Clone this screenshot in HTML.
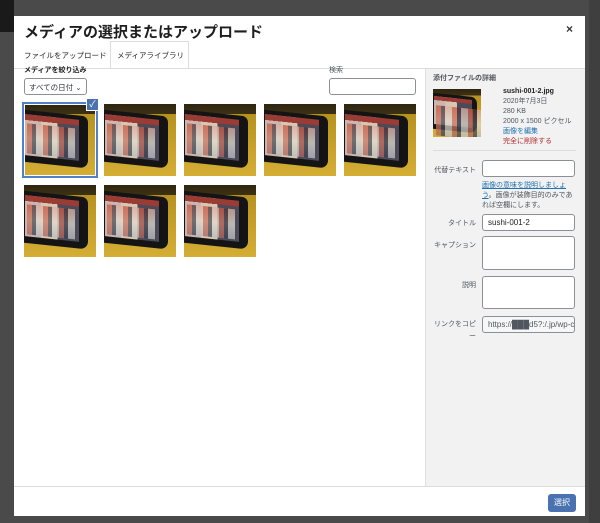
<!DOCTYPE html><html><head><meta charset="utf-8"><style>
*{box-sizing:border-box;margin:0;padding:0}
body{width:600px;height:523px;overflow:hidden;background:#4a4a4a;font-family:"Liberation Sans","Noto Sans CJK JP",sans-serif;position:relative;color:#1e1e1e}
.abs{position:absolute;white-space:nowrap}
.modal{position:absolute;left:14px;top:16px;width:571px;height:500px;background:#fff}
.th{position:absolute;width:72px;height:72px;overflow:hidden;background:linear-gradient(#2e2510 0,#3e3214 14%,#b8921f 14%,#d4ae34 100%)}
.th .fr{position:absolute;left:-2px;top:9px;width:66px;height:52px;background:#141414;border-radius:0 6px 8px 0;transform:skewY(6deg)}
.th .sc{position:absolute;left:1px;top:13px;width:54px;height:41px;transform:skewY(6deg);background:
linear-gradient(#9c3b33 0,#9c3b33 14%,transparent 14%),
linear-gradient(90deg,#c9b7ae 0 30%,#d7c6b0 30% 60%,#4a4a58 60% 100%)}
.th .sc:before{content:"";position:absolute;left:2px;top:9px;width:48px;height:30px;background:
repeating-linear-gradient(90deg,rgba(200,80,50,.7) 0 5px,rgba(30,30,40,.7) 5px 9px,rgba(230,220,200,.6) 9px 16px),
linear-gradient(#c66 0,#ddd 50%,#7890b8 100%);opacity:.75}
.lbl{font-size:7px;color:#50575e;text-align:right;width:70px;left:406px}
.inp{position:absolute;left:482px;width:93px;border:1px solid #8c8f94;border-radius:3px;background:#fff;font-size:8px;padding:3px 5px;white-space:nowrap;overflow:hidden}
</style></head><body>
<div class="abs" style="left:0;top:0;width:14px;height:32px;background:#1a1a1a"></div>
<div class="abs" style="left:589px;top:0;width:11px;height:523px;background:#3f3f3f"></div>
<div class="modal"></div>
<div class="abs" style="left:24px;top:21px;font-size:15px;font-weight:bold">メディアの選択またはアップロード</div>
<div class="abs" style="left:566px;top:22px;font-size:12px;font-weight:bold;color:#333">×</div>
<div class="abs" style="left:24px;top:50px;font-size:7.5px">ファイルをアップロード</div>
<div class="abs" style="left:110px;top:41px;width:79px;height:28px;border:1px solid #dcdcde;border-bottom:1px solid #fff;background:#fff;font-size:7.5px;padding:8px 0 0 6px">メディアライブラリ</div>
<div class="abs" style="left:14px;top:68px;width:571px;height:1px;background:#dcdcde"></div>
<div class="abs" style="left:425px;top:69px;width:160px;height:417px;background:#f2f2f2;border-left:1px solid #e0e0e0"></div>
<div class="abs" style="left:14px;top:486px;width:571px;height:1px;background:#dcdcde"></div>
<div class="abs" style="left:24px;top:65px;font-size:7px;font-weight:bold">メディアを絞り込み</div>
<div class="abs" style="left:24px;top:78px;width:63px;height:17px;border:1px solid #8c8f94;border-radius:3px;font-size:7.5px;padding:3px 0 0 4px;color:#2c3338">すべての日付 ⌄</div>
<div class="abs" style="left:329px;top:65px;font-size:7px;color:#50575e">検索</div>
<div class="abs" style="left:329px;top:78px;width:87px;height:17px;border:1px solid #8c8f94;border-radius:3px;background:#fff"></div>

<div class="th" style="left:24px;top:104px"><div class="fr"></div><div class="sc"></div></div>
<div class="th" style="left:104px;top:104px"><div class="fr"></div><div class="sc"></div></div>
<div class="th" style="left:184px;top:104px"><div class="fr"></div><div class="sc"></div></div>
<div class="th" style="left:264px;top:104px"><div class="fr"></div><div class="sc"></div></div>
<div class="th" style="left:344px;top:104px"><div class="fr"></div><div class="sc"></div></div>
<div class="th" style="left:24px;top:185px"><div class="fr"></div><div class="sc"></div></div>
<div class="th" style="left:104px;top:185px"><div class="fr"></div><div class="sc"></div></div>
<div class="th" style="left:184px;top:185px"><div class="fr"></div><div class="sc"></div></div>
<div class="abs" style="left:22px;top:102px;width:76px;height:76px;border:2px solid #4f80c8;box-shadow:0 0 0 1px #fff inset"></div>
<div class="abs" style="left:86px;top:98px;width:13px;height:13px;background:#4a72b0;border:1px solid #fff;color:#fff;font-size:9px;text-align:center;line-height:11px">✓</div>

<div class="abs" style="left:433px;top:73px;font-size:7px;font-weight:bold;color:#50575e">添付ファイルの詳細</div>
<div class="th" style="left:433px;top:89px;width:48px;height:48px"><div class="fr" style="width:46px;height:36px;top:6px"></div><div class="sc" style="width:38px;height:28px;top:9px"></div></div>
<div class="abs" style="left:503px;top:87px;font-size:7px;line-height:10px;color:#1e1e1e"><b>sushi-001-2.jpg</b><br><span style="color:#50575e">2020年7月3日<br>280 KB<br>2000 x 1500 ピクセル</span><br><span style="color:#2271b1">画像を編集</span><br><span style="color:#b32d2e">完全に削除する</span></div>
<div class="abs" style="left:433px;top:150px;width:143px;height:1px;background:#dcdcde"></div>
<div class="abs lbl" style="top:165px">代替テキスト</div>
<div class="inp" style="top:160px;height:17px"></div>
<div class="abs" style="left:482px;top:181px;font-size:7px;line-height:10px;color:#50575e;white-space:normal;width:94px"><span style="color:#2271b1;text-decoration:underline">画像の意味を説明しましょう</span>。画像が装飾目的のみであれば空欄にします。</div>
<div class="abs lbl" style="top:218px">タイトル</div>
<div class="inp" style="top:214px;height:17px">sushi-001-2</div>
<div class="abs lbl" style="top:240px">キャプション</div>
<div class="inp" style="top:236px;height:34px"></div>
<div class="abs lbl" style="top:280px">説明</div>
<div class="inp" style="top:276px;height:33px"></div>
<div class="abs lbl" style="top:319px;white-space:normal;line-height:12px">リンクをコピ<br>ー</div>
<div class="inp" style="top:316px;height:17px;background:#f6f7f7;color:#50575e">https://███d5?:/.jp/wp-co</div>

<div class="abs" style="left:548px;top:494px;width:28px;height:18px;background:#4a72b0;border-radius:3px;color:#fff;font-size:8px;text-align:center;line-height:18px">選択</div>
</body></html>
